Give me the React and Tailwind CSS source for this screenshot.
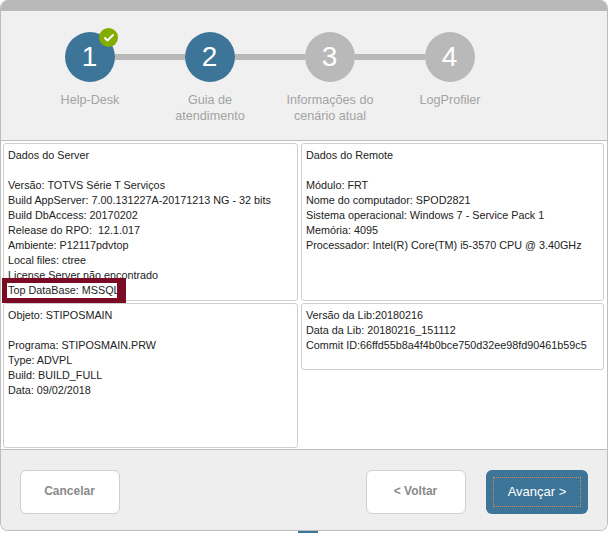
import { Check } from "lucide-react";

const steps = [
  { n: 1, label: ["Help-Desk"], active: true, done: true },
  { n: 2, label: ["Guia de", "atendimento"], active: true },
  { n: 3, label: ["Informações do", "cenário atual"] },
  { n: 4, label: ["LogProfiler"] },
];

function Circle({ step }) {
  return (
    <div
      className={`relative flex h-[50px] w-[50px] shrink-0 items-center justify-center rounded-full pr-[1px] text-[28px] leading-none text-white ${
        step.active ? "bg-[#3d7599]" : "bg-[#b9b9b9]"
      }`}
    >
      {step.n}
      {step.done && (
        <span className="absolute left-[34px] top-[-4px] flex h-[19px] w-[19px] items-center justify-center rounded-full bg-[#83ac00]">
          <Check size={12} strokeWidth={4} color="#fff" />
        </span>
      )}
    </div>
  );
}

function Panel({ className, lines }) {
  return (
    <div className={`rounded-[3px] border border-[#cfcfcf] bg-white px-[4px] py-[4px] text-[10.8px] leading-[15px] text-[#222] ${className}`}>
      {lines.map((line, i) => (
        <div key={i} className="h-[15px] whitespace-pre">{line}</div>
      ))}
    </div>
  );
}

function Button({ children, className }) {
  return (
    <button className={`flex h-[44px] w-[100px] items-center justify-center rounded-[6px] border border-[#cfcfcf] bg-white pb-[2px] pr-[1px] text-[12px] font-bold text-[#8a8a8a] ${className || ""}`}>
      {children}
    </button>
  );
}

export default function App() {
  return (
    <div className="h-[533px] w-[608px] overflow-hidden bg-white font-['Liberation_Sans',Arial,sans-serif]">
      <div className="relative h-[531px] w-[608px] overflow-hidden rounded-[8px] border-x border-b border-[#bdbdbd]">
        <div className="h-[11px] bg-[#b9b9b9]" />

        {/* Steps */}
        <div className="h-[129px] bg-[#f0f0f0] pt-[21px]">
          <div className="flex items-center pl-[64px]">
            {steps.map((s, i) => (
              <div key={s.n} className="flex items-center">
                <Circle step={s} />
                {i < steps.length - 1 && <div className="h-[6px] w-[70px] bg-[#b9b9b9]" />}
              </div>
            ))}
          </div>
          <div className="mt-[10px] flex pl-[29px]">
            {steps.map((s) => (
              <div key={s.n} className="w-[120px] text-center text-[12.6px] leading-[16px] text-[#a3a3a3]">
                {s.label.map((l) => (
                  <div key={l}>{l}</div>
                ))}
              </div>
            ))}
          </div>
        </div>

        {/* Panels */}
        <div className="flex h-[310px] gap-[3px] border-y border-[#bdbdbd] bg-white pl-[2px] pt-[2px]">
          <div className="flex w-[295px] flex-col gap-[2px]">
            <Panel
              className="h-[158px] overflow-hidden"
              lines={[
                "Dados do Server",
                "",
                "Versão: TOTVS Série T Serviços",
                "Build AppServer: 7.00.131227A-20171213 NG - 32 bits",
                "Build DbAccess: 20170202",
                "Release do RPO:  12.1.017",
                "Ambiente: P12117pdvtop",
                "Local files: ctree",
                "License Server não encontrado",
                "Top DataBase: MSSQL",
              ]}
            />
            <Panel
              className="h-[145px]"
              lines={[
                "Objeto: STIPOSMAIN",
                "",
                "Programa: STIPOSMAIN.PRW",
                "Type: ADVPL",
                "Build: BUILD_FULL",
                "Data: 09/02/2018",
              ]}
            />
          </div>
          <div className="flex w-[303px] flex-col gap-[2px]">
            <Panel
              className="h-[158px]"
              lines={[
                "Dados do Remote",
                "",
                "Módulo: FRT",
                "Nome do computador: SPOD2821",
                "Sistema operacional: Windows 7 - Service Pack 1",
                "Memória: 4095",
                "Processador: Intel(R) Core(TM) i5-3570 CPU @ 3.40GHz",
              ]}
            />
            <Panel
              className="h-[67px]"
              lines={[
                "Versão da Lib:20180216",
                "Data da Lib: 20180216_151112",
                "Commit ID:66ffd55b8a4f4b0bce750d32ee98fd90461b59c5",
              ]}
            />
          </div>
        </div>

        {/* Footer */}
        <div className="flex h-[81px] items-start bg-[#eeeeee] pl-[19px] pr-[19px] pt-[20px]">
          <Button>Cancelar</Button>
          <Button className="ml-auto">&lt; Voltar</Button>
          <button className="ml-[20px] h-[44px] w-[102px] rounded-[6px] bg-[#3d7599] p-[7px] text-[13px] text-white">
            <span className="flex h-full w-full items-center justify-center border border-dotted border-[#d98a4a]">Avançar &gt;</span>
          </button>
        </div>

        {/* Highlight over the first panel */}
        <div className="absolute left-[1px] top-[278px] h-[25px] w-[124px] border-y-[5px] border-l-[5px] border-r-[9px] border-[#7b0a24]" />
      </div>
      <div className="ml-[298px] h-[2px] w-[20px] bg-[#3d7599]" />
    </div>
  );
}
